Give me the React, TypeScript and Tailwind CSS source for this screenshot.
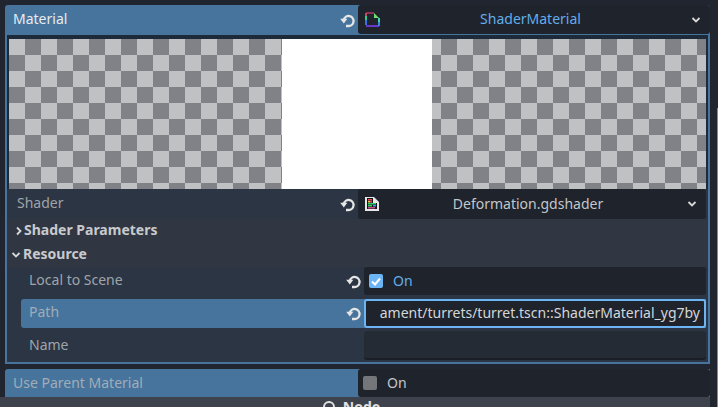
import type { ReactNode } from 'react'

const font = { fontFamily: '"Noto Sans", sans-serif' }

function Revert({ className = '' }: { className?: string }) {
  return (
    <svg width="15" height="15" viewBox="0 0 15 15" fill="none" className={className}>
      <path d="M6 13 H8.6 A5 5 0 1 0 3.8 6.4" stroke="#e6e6e6" strokeWidth="2.3" />
      <path d="M0.2 5.8 L7.4 5.8 L3.8 10.4 Z" fill="#e6e6e6" />
    </svg>
  )
}

function Chevron({ className = '' }: { className?: string }) {
  return (
    <svg width="10" height="8" viewBox="0 0 10 8" fill="none" className={className}>
      <path d="M1.5 2 L5 5.5 L8.5 2" stroke="#d8d8d8" strokeWidth="1.8" />
    </svg>
  )
}

function MaterialIcon() {
  return (
    <svg width="15" height="15" viewBox="0 0 15 15" fill="none">
      <path d="M1 1 H9" stroke="#8c3058" strokeWidth="2" />
      <path d="M1 1 V4" stroke="#c04a60" strokeWidth="2" />
      <path d="M1 4 V8" stroke="#38c88c" strokeWidth="2" />
      <path d="M1 8 V13" stroke="#3a70e0" strokeWidth="2" />
      <path d="M1 14 H14" stroke="#6a38c8" strokeWidth="2" />
      <path d="M14 14 V10" stroke="#3a88e0" strokeWidth="2" />
      <path d="M14 10 V6" stroke="#38d8b0" strokeWidth="2" />
      <path d="M9 1 V6 H14 Z" fill="#70e070" />
    </svg>
  )
}

function ShaderIcon() {
  return (
    <svg width="14" height="14" viewBox="0 0 14 14">
      <path d="M0 0 H9 L14 5 V14 H0 Z" fill="#e6e6e6" />
      <path d="M2 1 H8 V6 H12 V12 H2 Z" fill="#14141c" />
      <rect x="3" y="2" width="4" height="1.5" fill="#f04848" />
      <rect x="3" y="4" width="2" height="1.5" fill="#f0c840" />
      <rect x="5" y="4" width="2" height="1.5" fill="#f04848" />
      <rect x="3" y="6" width="8" height="1.5" fill="#30d068" />
      <rect x="3" y="8" width="4" height="1.5" fill="#30d068" />
      <rect x="8" y="8" width="3" height="1.5" fill="#4a8cf0" />
      <rect x="3" y="10" width="7" height="1.5" fill="#d04888" />
    </svg>
  )
}

function Checker({ className }: { className: string }) {
  return (
    <div
      className={`h-full bg-[#c0c1c3] bg-[repeating-conic-gradient(#808287_0_25%,#c0c1c3_0_50%)] bg-[length:32px_32px] ${className}`}
    />
  )
}

function Box({ children, className = '' }: { children?: ReactNode; className?: string }) {
  return (
    <div className={`flex items-center rounded-[3px] bg-[#1f232c] ${className}`}>{children}</div>
  )
}

export default function App() {
  return (
    <div style={font} className="relative flex h-[407px] w-[718px] flex-col overflow-hidden bg-[#21252f] text-[14px]">
      <div className="ml-[5px] mt-[5px] flex w-[705px] flex-col">
        <div className="flex h-[30px] items-start rounded-t-[3px] bg-[#47749c]">
          <span className="ml-2 mt-[3px] w-[327px] text-[#e8ecf0]">Material</span>
          <Revert className="mt-[8px]" />
          <Box className="ml-[3px] h-[29px] flex-1 pl-[7px] pr-[9px]">
            <MaterialIcon />
            <span className="flex-1 pb-[2px] pr-[10px] text-center text-[#63aeea]">ShaderMaterial</span>
            <Chevron />
          </Box>
        </div>

        <div className="flex h-[329px] flex-col border-2 border-t-0 border-[#47749c] bg-[#2b3543]">
          <div className="flex h-[154px] shrink-0 bg-[#1d2a3a] px-[2px] pt-[4px]">
            <Checker className="w-[273px]" />
            <div className="h-full w-[150px] bg-white" />
            <Checker className="flex-1 bg-[position:-7px_0]" />
          </div>

          <div className="flex h-[30px] shrink-0 items-center pl-[10px]">
            <span className="w-[323px] pb-[4px] text-[#a0a4aa]">Shader</span>
            <Revert />
            <Box className="ml-[3px] h-[30px] w-[348px] pl-[7px] pr-[9px]">
              <ShaderIcon />
              <span className="flex-1 pb-[2px] pr-[10px] text-center text-[#c4c6c9]">Deformation.gdshader</span>
              <Chevron />
            </Box>
          </div>

          <div className="flex flex-1 flex-col bg-[#303743]">
            <div className="flex h-[23px] items-center pl-[7px] font-bold text-[#c8cacd]">
              <Chevron className="-mr-px -rotate-90" />
              <span className="ml-[-1px] pb-[2px] pl-[2px]">Shader Parameters</span>
            </div>
            <div className="flex h-[25px] items-center pl-[4px] font-bold text-[#c8cacd]">
              <Chevron />
              <span className="pb-[2px] pl-[2px]">Resource</span>
            </div>

            <div className="flex flex-1 flex-col bg-[#2b3543] pr-[2px]">
              <div className="flex h-[28px] items-center pl-[22px]">
                <span className="flex-1 pb-[4px] text-[#a0a4aa]">Local to Scene</span>
                <Revert className="mr-[3px]" />
                <Box className="h-[28px] w-[342px] pl-[5px]">
                  <div className="flex h-[14px] w-[14px] items-center justify-center rounded-[2px] bg-[#6cb4f4]">
                    <svg width="10" height="9" viewBox="0 0 10 9" fill="none">
                      <path d="M1 4.5 L4 7.5 L9 1.5" stroke="#ffffff" strokeWidth="2" />
                    </svg>
                  </div>
                  <span className="ml-[10px] pb-[2px] text-[#63aeea]">On</span>
                </Box>
              </div>

              <div className="ml-[14px] mt-[4px] flex h-[29px] items-center rounded-l-[3px] bg-[#47749c] pl-[8px]">
                <span className="flex-1 pb-[4px] text-[#a0adb8]">Path</span>
                <Revert className="mr-[3px]" />
                <div className="flex h-[29px] w-[342px] items-center justify-end rounded-[3px] border-2 border-[#6cb4f4] bg-[#1f232c] pb-[2px] pr-[4px] text-[#d4d6d8]">
                  <span className="whitespace-nowrap">ament/turrets/turret.tscn::ShaderMaterial_yg7by</span>
                </div>
              </div>

              <div className="mt-[3px] flex h-[29px] items-center pl-[22px]">
                <span className="flex-1 pb-[2px] text-[#a0a4aa]">Name</span>
                <div className="h-[29px] w-[342px] rounded-[3px] border-b-2 border-[#1a1e26] bg-[#252b35]" />
              </div>
            </div>
          </div>
        </div>

        <div className="mt-[5px] flex h-[28px] items-center rounded-tl-[3px] bg-[#47749c]">
          <span className="ml-2 w-[345px] pb-[2px] text-[#a0adb8]">Use Parent Material</span>
          <Box className="h-[28px] flex-1 pl-[5px]">
            <div className="h-[14px] w-[14px] rounded-[2px] bg-[#757679]" />
            <span className="ml-[10px] pb-[1px] text-[#c4c6c9]">On</span>
          </Box>
        </div>
      </div>

      <div className="flex h-[10px] w-[710px] items-start justify-center overflow-hidden bg-[#3e424c] text-[14px] font-bold text-[#e0e0e0]">
        <span className="mr-[7px] mt-[-1px] flex items-center gap-[8px]">
          <span className="h-[12px] w-[12px] rounded-full border-2 border-[#e0e0e0]" />
          Node
        </span>
      </div>

      {/* scrollbar grabber on the far right */}
      <div className="absolute right-0 top-[108px] h-[299px] w-px bg-[#8a8b8e]" />
    </div>
  )
}
